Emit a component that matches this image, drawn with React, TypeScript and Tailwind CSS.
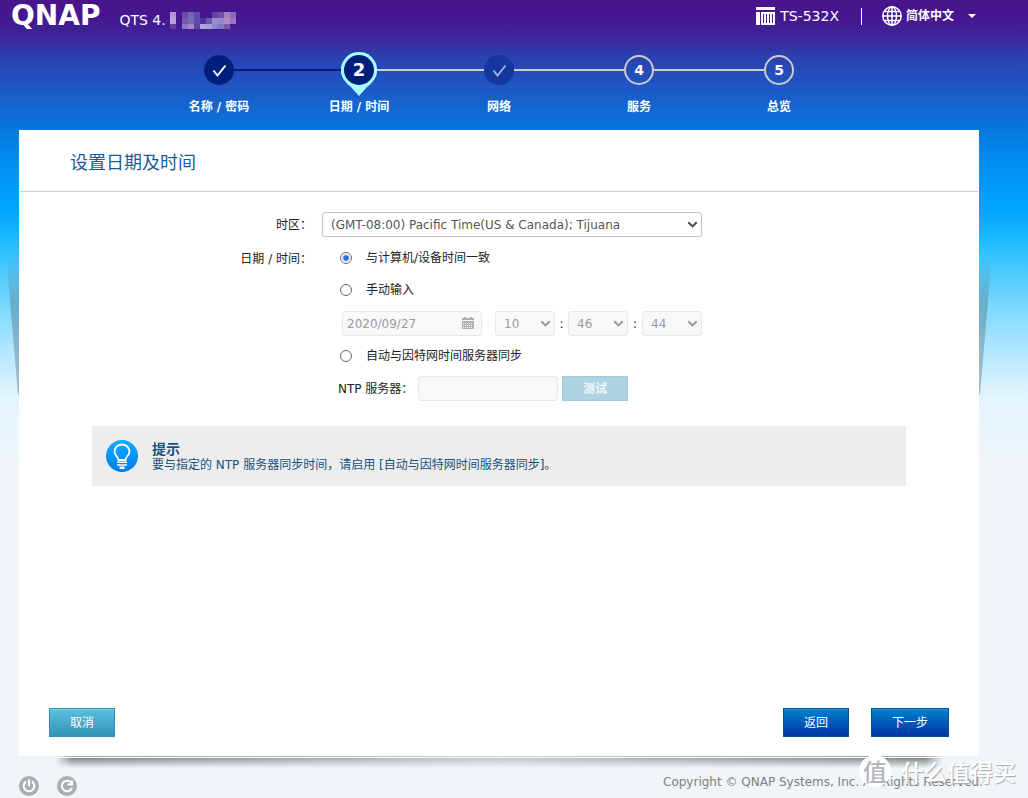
import { useState } from 'react';
import type { ReactNode, SelectHTMLAttributes } from 'react';

type StepState = 'done' | 'current' | 'skipped' | 'todo';

const steps: { label: string; state: StepState }[] = [
  { label: '名称 / 密码', state: 'done' },
  { label: '日期 / 时间', state: 'current' },
  { label: '网络', state: 'skipped' },
  { label: '服务', state: 'todo' },
  { label: '总览', state: 'todo' },
];

const mosaic: [number, number, string][] = [
  [0, 1, '#b296d0'], [0, 2, '#b9a2d6'], [0, 3, '#6b3ba0'],
  [2, 1, '#6a4aa6'], [3, 1, '#7466b4'], [4, 1, '#5f4ba8'],
  [2, 2, '#7a58a8'], [3, 2, '#6f6cba'], [4, 2, '#5f4ba8'], [5, 2, '#4a35a0'], [6, 2, '#6f58b4'], [7, 2, '#a08ac8'], [8, 2, '#9a86c6'], [9, 2, '#b08cc4'], [10, 2, '#9a78bc'],
  [2, 3, '#8a78c0'], [3, 3, '#a486bc'], [4, 3, '#5a44a4'], [5, 3, '#b8a4cc'], [6, 3, '#a0a0d8'], [7, 3, '#8888cc'], [8, 3, '#8478c4'], [9, 3, '#7f55a6'],
  [7, 1, '#5f46a8'], [8, 1, '#7250a8'], [9, 1, '#a184c0'], [10, 1, '#8a68b2'],
];

function Mosaic() {
  return (
    <svg width="66" height="18" viewBox="0 0 66 18" shapeRendering="crispEdges" aria-hidden="true">
      {mosaic.map(([c, r, fill]) => (
        <rect key={`${c}-${r}`} x={c * 6} y={r * 6 - 5} width="6" height="6" fill={fill} />
      ))}
    </svg>
  );
}

function Check() {
  return (
    <svg width="30" height="30" viewBox="0 0 30 30" fill="none" stroke="currentColor" strokeWidth="2" aria-hidden="true">
      <path d="M9.5 15.5l4 5 8-10" />
    </svg>
  );
}

function Marker({ state, n }: { state: StepState; n: number }) {
  if (state === 'current') {
    return (
      <span className="relative flex h-9 w-9 items-center justify-center">
        <svg className="absolute left-0 top-0" width="36" height="44" viewBox="0 0 36 44" aria-hidden="true">
          <path d="M18 0a18 18 0 0 1 15.5 27.2Q30 32 26 35L18 44l-8-9q-4-3-7.500-7.800A18 18 0 0 1 18 0z" fill="#a6ffff" />
          <circle cx="18" cy="18" r="15" fill="#001f7c" />
        </svg>
        <span className="relative text-lg font-bold">{n}</span>
      </span>
    );
  }
  if (state === 'done') {
    return <span className="h-[30px] w-[30px] rounded-full bg-[#001f7c]"><Check /></span>;
  }
  if (state === 'skipped') {
    return <span className="h-[30px] w-[30px] rounded-full bg-[#15369b] text-[#9fb0e6]"><Check /></span>;
  }
  return (
    <span className="flex h-[30px] w-[30px] items-center justify-center rounded-full border-2 border-[#cbcbd0] text-sm font-bold">
      {n}
    </span>
  );
}

function Stepper() {
  return (
    <ol className="mx-auto flex max-w-[700px]">
      {steps.map((s, i) => (
        <li key={s.label} className="flex flex-1 flex-col items-center gap-[11px]">
          <div className="flex h-9 w-full items-center">
            <span className={`h-0.5 flex-1 ${i === 0 ? 'bg-transparent' : i === 1 ? 'bg-[#001f7c]' : 'bg-[#cdcdd6]'}`} />
            <Marker state={s.state} n={i + 1} />
            <span className={`h-0.5 flex-1 ${i === 4 ? 'bg-transparent' : i === 0 ? 'bg-[#001f7c]' : 'bg-[#cdcdd6]'}`} />
          </div>
          <span className="text-xs leading-4 font-bold">{s.label}</span>
        </li>
      ))}
    </ol>
  );
}

function TopBar() {
  return (
    <div className="flex h-8 items-center pr-[22px] pl-[11px]">
      <span className="text-[28px] leading-8 font-bold">QNAP</span>
      <div className="mt-2 ml-[19px] flex items-center gap-1 text-sm leading-5">
        <span>QTS 4.</span>
        <Mosaic />
      </div>
      <div className="ml-auto flex items-center">
        <svg width="19" height="18" viewBox="0 0 19 18" fill="#fff" shapeRendering="crispEdges" aria-hidden="true">
          <path d="M0 0h19v3H0zM0 5h4v13H0zM5 5h14v2H5zM5 7h2v11H5zM8 7h2v9H8zM11 7h2v9h-2zM14 7h2v9h-2zM17 7h2v11h-2zM5 16h14v2H5z" />
        </svg>
        <span className="ml-[5px] text-sm">TS-532X</span>
        <span className="ml-[22px] h-[17px] w-px bg-white" />
        <button type="button" className="ml-5 flex items-center text-xs font-bold">
          <svg width="20" height="20" viewBox="0 0 20 20" fill="none" stroke="#fff" strokeWidth="1.500" aria-hidden="true">
            <circle cx="10" cy="10" r="9.200" />
            <ellipse cx="10" cy="10" rx="4.500" ry="9.200" />
            <path d="M10 1v18M1 10h18M2.500 5.500h15M2.500 14.500h15" />
          </svg>
          <span className="ml-1">简体中文</span>
          <svg className="ml-3.5" width="8" height="4" viewBox="0 0 8 4" fill="#fff" aria-hidden="true">
            <path d="M0 0h8L4 4z" />
          </svg>
        </button>
      </div>
    </div>
  );
}

function Select({ children, className, muted, ...rest }: SelectHTMLAttributes<HTMLSelectElement> & { muted?: boolean }) {
  return (
    <span className={`relative inline-flex ${className}`}>
      <select
        {...rest}
        className={`h-[25px] w-full appearance-none rounded-[3px] border px-2 text-xs ${muted ? 'border-[#e8e8e8] bg-[#f8f8f8] text-[#9b9b9b] opacity-100' : 'border-[#c3c3c3] bg-white text-[#555]'}`}
      >
        {children}
      </select>
      <svg
        className={`pointer-events-none absolute top-[9px] right-1 ${muted ? 'text-[#9a9a9a]' : 'text-[#4a4a4a]'}`}
        width="11"
        height="8"
        viewBox="0 0 11 8"
        fill="none"
        stroke="currentColor"
        strokeWidth="2"
        aria-hidden="true"
      >
        <path d="M1.300 1.200L5.500 5.400 9.700 1.200" />
      </svg>
    </span>
  );
}

function RadioRow({ value, current, onPick, children }: { value: string; current: string; onPick: (v: string) => void; children: ReactNode }) {
  return (
    <label className="flex h-6 items-center gap-3.5 pl-[18px]">
      <input
        type="radio"
        name="time-source"
        value={value}
        checked={current === value}
        onChange={() => onPick(value)}
        className="h-3 w-3 appearance-none rounded-full border border-[#686868] bg-white checked:bg-[radial-gradient(circle,#3068d8_2px,#fff_4px)]"
      />
      {children}
    </label>
  );
}

function CalendarIcon() {
  return (
    <svg className="pointer-events-none absolute top-1.5 right-2" width="12" height="12" viewBox="0 0 12 12" aria-hidden="true">
      <path d="M0 1h12v11H0zM2 0h2v1H2zM8 0h2v1H8z" fill="#b0b0b0" />
      <path d="M1 6.500h10M1 8.500h10M1 10.500h10" stroke="#f8f8f8" strokeDasharray="1 1" />
      <path d="M0 3.500h12" stroke="#f8f8f8" />
    </svg>
  );
}

function Wedge({ className }: { className: string }) {
  return (
    <svg className={`absolute top-[124px] ${className}`} width="13" height="141" viewBox="0 0 13 141" aria-hidden="true">
      <defs>
        <linearGradient id="wedge" x1="0" y1="0" x2="0" y2="1">
          <stop offset="0" stopColor="#5f8ea0" stopOpacity="0" />
          <stop offset="0.350" stopColor="#5a8ba0" stopOpacity="0.550" />
          <stop offset="1" stopColor="#8a9ba8" stopOpacity="0.600" />
        </linearGradient>
      </defs>
      <path d="M0 0h13v141h-1z" fill="url(#wedge)" />
    </svg>
  );
}

function SettingsForm() {
  const [source, setSource] = useState('computer');
  return (
    <form className="grid grid-cols-[293px_1fr] gap-x-2.5 gap-y-2 pt-5 text-xs text-[#222]" onSubmit={(e) => e.preventDefault()}>
      <label htmlFor="tz" className="text-right leading-[26px]">时区：</label>
      <Select id="tz" className="w-[380px]">
        <option>(GMT-08:00) Pacific Time(US &amp; Canada); Tijuana</option>
      </Select>
      <span className="text-right leading-[26px]">日期 / 时间：</span>
      <div className="flex flex-col gap-2">
        <RadioRow value="computer" current={source} onPick={setSource}>与计算机/设备时间一致</RadioRow>
        <RadioRow value="manual" current={source} onPick={setSource}>手动输入</RadioRow>
        <div className="flex h-[26px] items-end pl-5">
          <span className="relative inline-flex w-[140px]">
            <input
              aria-label="日期"
              disabled
              defaultValue="2020/09/27"
              className="h-[25px] w-full rounded-[3px] border border-[#e8e8e8] bg-[#f8f8f8] px-1 text-xs text-[#9b9b9b]"
            />
            <CalendarIcon />
          </span>
          <Select aria-label="时" disabled muted className="ml-[13px] w-[60px]"><option>10</option></Select>
          <span className="w-[13px] text-center leading-6">:</span>
          <Select aria-label="分" disabled muted className="w-[60px]"><option>46</option></Select>
          <span className="w-[14px] text-center leading-6">:</span>
          <Select aria-label="秒" disabled muted className="w-[60px]"><option>44</option></Select>
        </div>
        <RadioRow value="ntp" current={source} onPick={setSource}>自动与因特网时间服务器同步</RadioRow>
        <div className="flex h-[25px] items-center pl-4">
          <label htmlFor="ntp" className="w-20">NTP 服务器：</label>
          <input id="ntp" disabled className="h-[25px] w-[140px] rounded-[3px] border border-[#e8e8e8] bg-[#f8f8f8] px-1" />
          <button type="button" disabled className="ml-1 h-[25px] w-[66px] border border-[#a0cbd9] bg-[#aed4e1] font-bold text-[#eef7fa]">
            测试
          </button>
        </div>
      </div>
    </form>
  );
}

function Tip() {
  return (
    <aside className="mx-[73px] mt-[25px] flex h-[60px] items-center gap-3.5 bg-[#ededed] px-3.5 text-[#16517f]">
      <svg width="32" height="32" viewBox="0 0 32 32" aria-hidden="true">
        <defs>
          <linearGradient id="bulb" x1="0" y1="0" x2="0" y2="1">
            <stop offset="0" stopColor="#0aaeff" />
            <stop offset="1" stopColor="#007cec" />
          </linearGradient>
        </defs>
        <circle cx="16" cy="16" r="16" fill="url(#bulb)" />
        <path d="M12.500 20c-.2-3-4-4.800-4-8.600a7.500 6.900 0 0 1 15 0c0 3.800-3.800 5.600-4 8.600z" fill="none" stroke="#fff" strokeWidth="1.800" />
        <path d="M11 22.300h10M11 25h10" stroke="#fff" strokeWidth="1.600" />
        <path d="M13.500 26.500h5v2.500h-5z" fill="#fff" />
      </svg>
      <div className="pt-0.5">
        <h2 className="text-sm leading-4 font-bold">提示</h2>
        <p className="text-xs leading-4">要与指定的 NTP 服务器同步时间，请启用 [自动与因特网时间服务器同步]。</p>
      </div>
    </aside>
  );
}

const primary =
  'h-[29px] border border-[#00539c] bg-linear-to-b from-[#0880cc] to-[#0034a4] text-xs text-white inset-shadow-[0_1px_0_#1b98da]';

function Footer() {
  return (
    <footer className="relative h-[42px] bg-[#eff5f9]">
      <div className="absolute top-0 right-9 left-9 h-3 overflow-hidden">
        <div className="h-px bg-[linear-gradient(to_right,transparent,#a0a3a5_2%,#c9cdd0_50%,#a0a3a5_98%,transparent)]" />
        <div className="h-px bg-white" />
        <div className="h-2.5 bg-[linear-gradient(to_right,transparent,#808486_2%,#c3c8cb_50%,#808486_98%,transparent)] mask-b-from-0% mask-b-to-100%" />
      </div>
      <div className="flex pt-5">
        <button type="button" aria-label="关机" className="h-5 w-5">
          <svg width="20" height="20" viewBox="0 0 20 20" fill="none" stroke="#fff" strokeWidth="2" aria-hidden="true">
            <circle cx="10" cy="10" r="10" fill="#adadad" stroke="none" />
            <path d="M7.200 5.400a5.300 5.300 0 1 0 5.600 0M10 3.200v7" />
          </svg>
        </button>
        <button type="button" aria-label="重新启动" className="ml-[18px] h-5 w-5">
          <svg width="20" height="20" viewBox="0 0 20 20" fill="none" stroke="#fff" strokeWidth="2" aria-hidden="true">
            <circle cx="10" cy="10" r="10" fill="#adadad" stroke="none" />
            <path d="M14.500 7.200a5.200 5.200 0 1 0 .5 4.600M10.500 8.500h4.500V4.200" />
          </svg>
        </button>
        <p className="-mr-1 ml-auto text-xs leading-3 text-[#808080]">Copyright © QNAP Systems, Inc. All Rights Reserved.</p>
      </div>
    </footer>
  );
}

function Watermark() {
  return (
    <div className="pointer-events-none absolute right-3 bottom-[11px] flex items-center gap-2.5">
      <span className="flex h-8 w-8 items-center justify-center rounded-full bg-white font-['Noto_Sans_CJK_SC',sans-serif] text-2xl leading-8 font-medium text-[#b5b8ba]">值</span>
      <span className="font-['Noto_Sans_CJK_SC',sans-serif] text-[23px] leading-8 font-medium text-white [text-shadow:1px_1px_1px_#a5aaad]">什么值得买</span>
    </div>
  );
}

export default function App() {
  return (
    <div className="relative flex min-h-screen flex-col overflow-hidden bg-[#eff5f9] bg-[linear-gradient(to_bottom,#49148c_0px,#45188f_20px,#3630a0_46px,#2c40b0_56px,#0878de_130px,#0090f2_165px,#00a6ff_210px,#24beff_245px,#50ccff_275px,#86dbff_315px,#bdeaff_360px,#e3f5ff_398px,#eff5f9_460px)] font-['DejaVu_Sans','Noto_Sans_CJK_SC',sans-serif]">
      <div className="flex flex-1 flex-col pr-[30px]">
        <header className="pb-[15px] text-white">
          <TopBar />
          <div className="mt-5"><Stepper /></div>
        </header>
        <div className="mx-auto flex w-full max-w-[998px] flex-1 flex-col px-[19px]">
          <main className="relative flex flex-1 flex-col bg-white">
            <Wedge className="-left-[13px]" />
            <Wedge className="-right-[13px] -scale-x-100" />
            <h1 className="mx-px border-b border-[#cfcfcf] px-[50px] pt-[21px] pb-4 text-lg leading-6 text-[#1c5a9a]">设置日期及时间</h1>
            <SettingsForm />
            <Tip />
            <div className="mt-auto flex px-[30px] pb-[19px]">
              <button type="button" className="h-[29px] w-[66px] border border-[#3390ae] bg-linear-to-b from-[#5bbfdd] to-[#3095b5] text-xs text-white inset-shadow-[0_1px_0_#7cd0e8]">
                取消
              </button>
              <button type="button" className={`ml-auto w-[66px] ${primary}`}>返回</button>
              <button type="button" className={`ml-[22px] w-[78px] ${primary}`}>下一步</button>
            </div>
          </main>
          <Footer />
        </div>
      </div>
      <Watermark />
    </div>
  );
}
